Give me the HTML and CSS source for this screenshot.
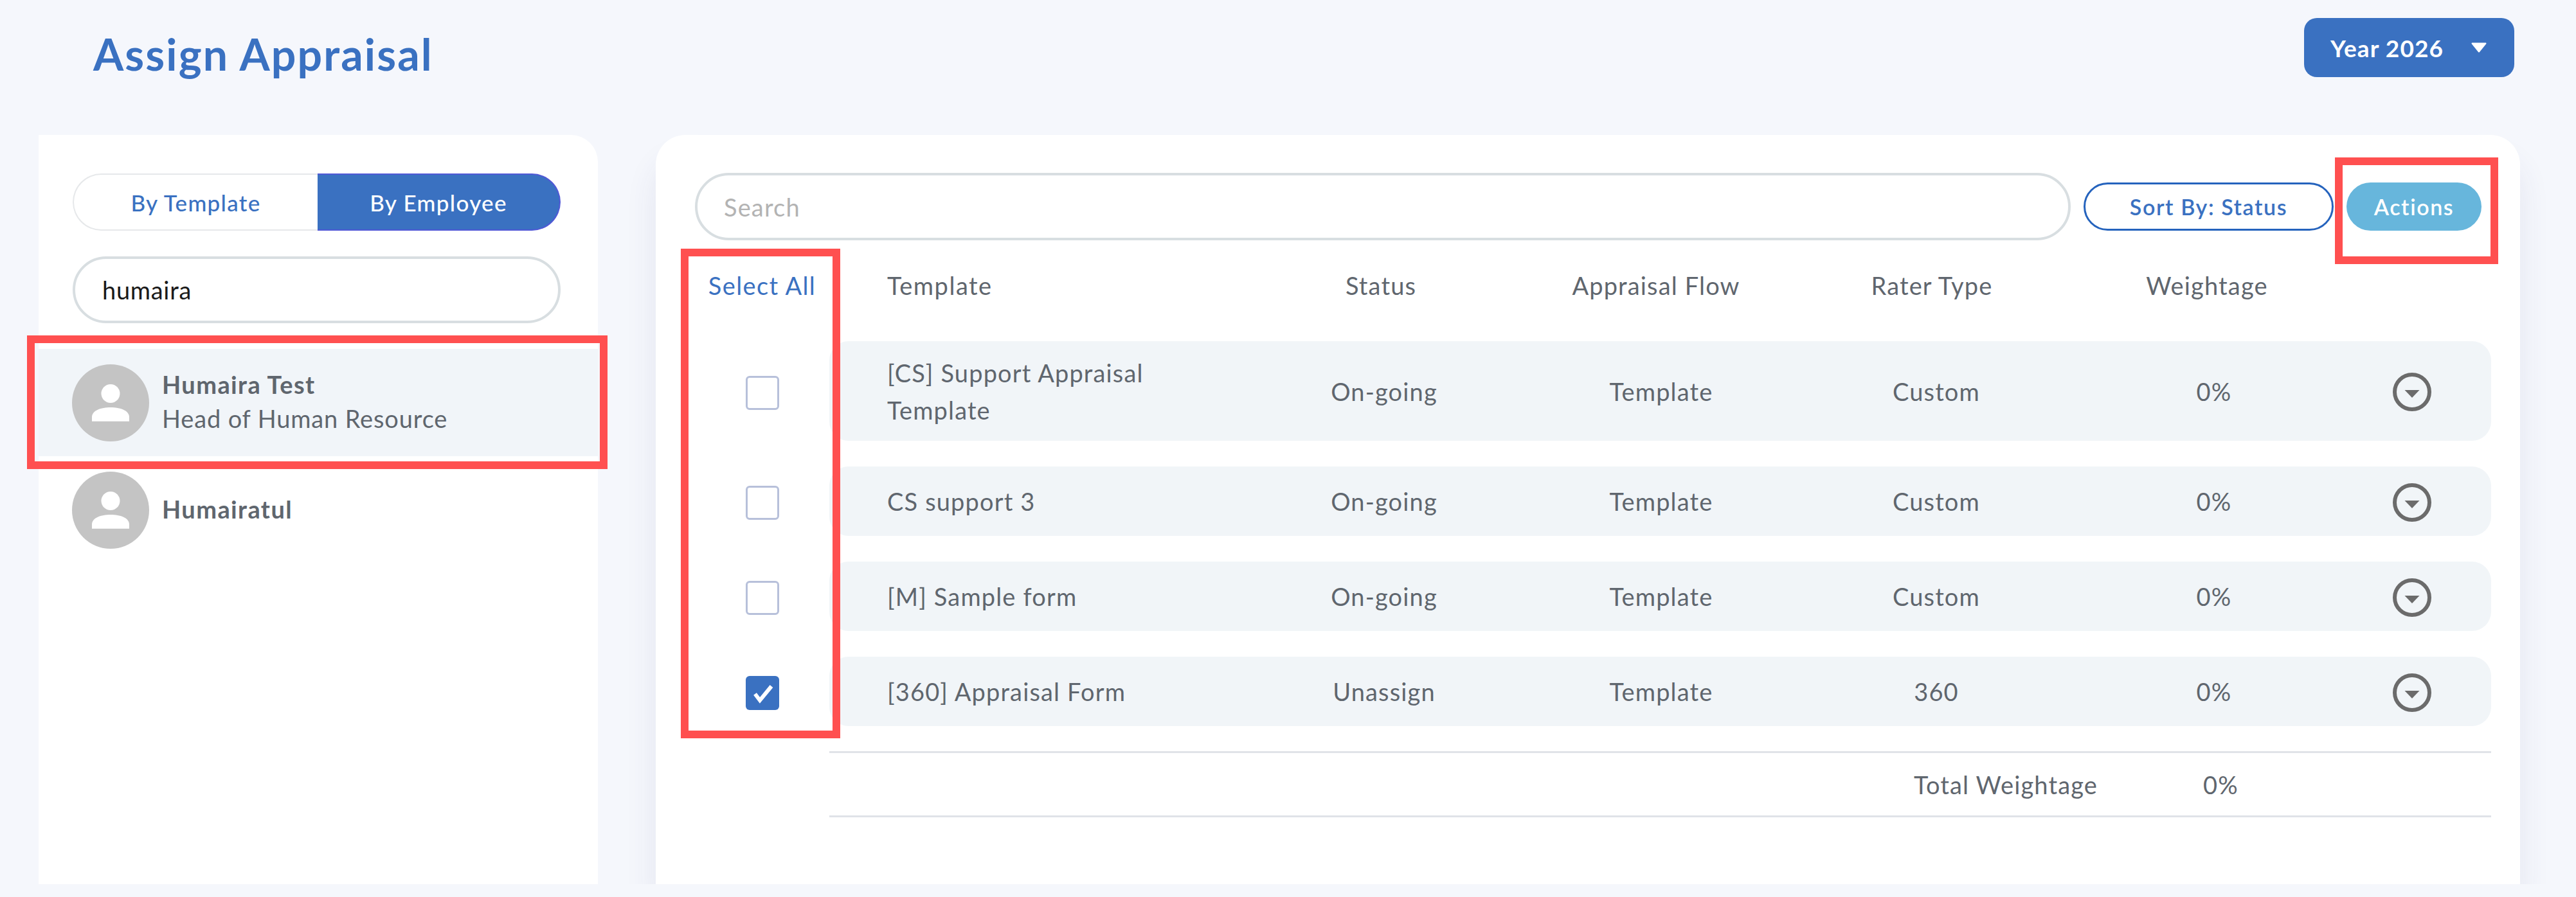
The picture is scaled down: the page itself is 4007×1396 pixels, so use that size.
FILE: index.html
```html
<!DOCTYPE html>
<html lang="en">
<head>
<meta charset="utf-8">
<title>Assign Appraisal</title>
<link rel="stylesheet" href="styles.css">
</head>
<body>
<div class="page">
  <header class="topbar">
    <h1 class="title">Assign Appraisal</h1>
    <button class="year-btn">Year 2026
      <svg class="year-caret" viewBox="0 0 26 16"><path d="M2.500 1.500H23.500L13 14.500Z" fill="#fff" stroke="#fff" stroke-width="2" stroke-linejoin="round"/></svg>
    </button>
  </header>
  <main class="content">
    <aside class="side">
      <div class="toggle">
        <div class="toggle-off">By Template</div>
        <div class="toggle-on">By Employee</div>
      </div>
      <div class="side-search">humaira</div>
      <ul class="people">
        <li class="person person-active">
          <svg class="avatar" viewBox="0 0 120 120"><circle cx="60" cy="60" r="60" fill="#c4c4c4"/><circle cx="60" cy="45.500" r="14.500" fill="#fff"/><path d="M31 88.700V82C31 72 45 67 60 67S89 72 89 82V88.700Z" fill="#fff"/></svg>
          <div class="person-text">
            <div class="person-name">Humaira Test</div>
            <div class="person-role">Head of Human Resource</div>
          </div>
        </li>
        <li class="person">
          <svg class="avatar" viewBox="0 0 120 120"><circle cx="60" cy="60" r="60" fill="#c4c4c4"/><circle cx="60" cy="45.500" r="14.500" fill="#fff"/><path d="M31 88.700V82C31 72 45 67 60 67S89 72 89 82V88.700Z" fill="#fff"/></svg>
          <div class="person-text">
            <div class="person-name">Humairatul</div>
          </div>
        </li>
      </ul>
    </aside>
    <section class="panel">
      <div class="toolbar">
        <div class="search">Search</div>
        <button class="sort-btn">Sort By: Status</button>
        <button class="actions-btn">Actions</button>
      </div>
      <div class="thead">
        <div class="select-all">Select All</div>
        <div class="thead-cols">
          <div class="th-template">Template</div>
          <div class="cell">Status</div>
          <div class="cell">Appraisal Flow</div>
          <div class="cell">Rater Type</div>
          <div class="cell">Weightage</div>
        </div>
      </div>
      <div class="tbody">
        <div class="line tall">
          <div class="check-cell"><span class="check"></span></div>
          <div class="row">
            <div class="td-template">[CS] Support Appraisal Template</div>
            <div class="cell">On-going</div><div class="cell">Template</div><div class="cell">Custom</div><div class="cell">0%</div>
            <div class="cell"><svg class="chev" viewBox="0 0 60 60"><circle cx="30" cy="30" r="27" fill="none" stroke="#6b6b6b" stroke-width="6"/><path d="M18.500 27H41.500L30 39Z" fill="#6b6b6b"/></svg></div>
          </div>
        </div>
        <div class="line">
          <div class="check-cell"><span class="check"></span></div>
          <div class="row">
            <div class="td-template">CS support 3</div>
            <div class="cell">On-going</div><div class="cell">Template</div><div class="cell">Custom</div><div class="cell">0%</div>
            <div class="cell"><svg class="chev" viewBox="0 0 60 60"><circle cx="30" cy="30" r="27" fill="none" stroke="#6b6b6b" stroke-width="6"/><path d="M18.500 27H41.500L30 39Z" fill="#6b6b6b"/></svg></div>
          </div>
        </div>
        <div class="line">
          <div class="check-cell"><span class="check"></span></div>
          <div class="row">
            <div class="td-template">[M] Sample form</div>
            <div class="cell">On-going</div><div class="cell">Template</div><div class="cell">Custom</div><div class="cell">0%</div>
            <div class="cell"><svg class="chev" viewBox="0 0 60 60"><circle cx="30" cy="30" r="27" fill="none" stroke="#6b6b6b" stroke-width="6"/><path d="M18.500 27H41.500L30 39Z" fill="#6b6b6b"/></svg></div>
          </div>
        </div>
        <div class="line">
          <div class="check-cell"><span class="check check-on"><svg class="tick" viewBox="0 0 52 53"><path d="M14.500 28L22 38L40 16" fill="none" stroke="#fff" stroke-width="6"/></svg></span></div>
          <div class="row">
            <div class="td-template">[360] Appraisal Form</div>
            <div class="cell">Unassign</div><div class="cell">Template</div><div class="cell">360</div><div class="cell">0%</div>
            <div class="cell"><svg class="chev" viewBox="0 0 60 60"><circle cx="30" cy="30" r="27" fill="none" stroke="#6b6b6b" stroke-width="6"/><path d="M18.500 27H41.500L30 39Z" fill="#6b6b6b"/></svg></div>
          </div>
        </div>
      </div>
      <div class="total">
        <div class="total-label">Total Weightage</div>
        <div class="total-value">0%</div>
      </div>
    </section>
  </main>
  <div class="mark mark-person"></div>
  <div class="mark mark-select"></div>
  <div class="mark mark-actions"></div>
</div>
</body>
</html>
```
FILE: styles.css
```css
* { box-sizing: border-box; }
html, body { margin: 0; padding: 0; }
body {
  background: #f5f7fc;
  font-family: "Lato", "Liberation Sans", sans-serif;
  color: #5f666e;
  font-size: 38px;
  letter-spacing: 1.150px;
}
.page { position: relative; width: 4007px; height: 1396px; overflow: hidden; }

.topbar {
  display: flex;
  justify-content: space-between;
  align-items: flex-start;
  height: 210px;
  padding: 28px 96px 0 145px;
}
.title {
  margin: 16px 0 0;
  font-size: 68px;
  line-height: 80px;
  font-weight: 700;
  letter-spacing: 2.100px;
  color: #3a71c1;
}
.year-btn {
  display: flex;
  align-items: center;
  justify-content: space-between;
  width: 327px;
  height: 92px;
  padding: 0 42px 0 41px;
  border: 0;
  border-radius: 20px;
  background: #3a71c1;
  color: #fff;
  font: 700 37px "Lato", sans-serif;
  letter-spacing: 1.100px;
}
.year-caret { width: 26px; height: 16px; }

.content {
  display: flex;
  align-items: stretch;
  gap: 90px;
  height: 1166px;
  padding: 0 87px 0 60px;
}

.side {
  flex: 0 0 870px;
  padding-top: 60px;
  background: #fff;
  border-top-right-radius: 42px;
}
.toggle {
  display: flex;
  width: 759px;
  height: 89px;
  margin-left: 53px;
  font-size: 35px;
  font-weight: 500;
  letter-spacing: 1.300px;
}
.toggle-off, .toggle-on {
  display: flex;
  align-items: center;
  justify-content: center;
}
.toggle-off {
  flex: 0 0 381px;
  color: #3a71c1;
  border: 2px solid #e6e8ea;
  border-right: 0;
  border-radius: 45px 0 0 45px;
}
.toggle-on {
  flex: 1;
  color: #fff;
  background: #3a71c1;
  border: 2px solid #5058d6;
  border-left: 0;
  border-radius: 0 45px 45px 0;
}
.side-search {
  display: flex;
  align-items: center;
  width: 759px;
  height: 104px;
  margin: 40px 0 0 53px;
  padding-left: 42px;
  border: 4px solid #d8dee1;
  border-radius: 52px;
  color: #1a1a1a;
  letter-spacing: 0.700px;
}
.people { list-style: none; margin: 40px 0 0; padding: 0; }
.person {
  display: flex;
  align-items: center;
  gap: 20px;
  height: 167px;
  padding-left: 52px;
}
.person-active { background: #f1f5f9; }
.avatar { width: 120px; height: 120px; flex: none; }
.person-text { margin-top: -4px; }
.person-name { line-height: 52px; font-weight: 700; letter-spacing: 1.400px; }
.person-role { line-height: 54px; letter-spacing: 0.850px; }

.panel {
  flex: 1;
  padding: 59px 45px 0 61px;
  background: #fff;
  border-top-left-radius: 46px;
  border-top-right-radius: 46px;
  box-shadow: 0 40px 50px rgba(50, 60, 120, 0.09);
  clip-path: inset(-100px -100px 0 -100px);
}
.toolbar {
  display: flex;
  align-items: center;
  gap: 20px;
  height: 105px;
  padding-right: 15px;
}
.search {
  flex: 1;
  display: flex;
  align-items: center;
  height: 105px;
  padding-left: 41px;
  border: 4px solid #d8dee1;
  border-radius: 53px;
  color: #b3b3b3;
}
.sort-btn {
  width: 389px;
  height: 75px;
  border: 3px solid #2563bd;
  border-radius: 38px;
  background: #fff;
  color: #3a71c1;
  font: 600 34px "Lato", sans-serif;
  letter-spacing: 1.600px;
}
.actions-btn {
  width: 210px;
  height: 75px;
  border: 0;
  border-radius: 38px;
  background: #67b6dc;
  color: #fff;
  font: 600 34px "Lato", sans-serif;
  letter-spacing: 1.600px;
}

.thead {
  display: grid;
  grid-template-columns: 209px 1fr;
  align-items: center;
  height: 157px;
  padding-bottom: 16px;
}
.select-all { width: 209px; margin-top: -2px; text-align: center; color: #3a71c1; letter-spacing: 1.400px; }
.thead-cols {
  display: grid;
  grid-template-columns: 638px 440px 416px 442px 414px;
  align-items: center;
  margin-top: -2px;
}
.th-template { padding-left: 90px; letter-spacing: 1.500px; }
.cell { display: flex; align-items: center; justify-content: center; }

.tbody { display: flex; flex-direction: column; gap: 40px; }
.line { display: grid; grid-template-columns: 209px 1fr; height: 108px; }
.tall { height: 155px; }
.check-cell { display: flex; align-items: center; justify-content: center; padding-top: 5px; }
.check {
  display: block;
  width: 52px;
  height: 53px;
  border: 3px solid #b7c0da;
  border-radius: 6px;
  background: #fff;
}
.check-on { border: 0; background: #3a71c1; }
.tick { display: block; width: 52px; height: 53px; }
.row {
  display: grid;
  grid-template-columns: 647px 432px 430px 426px 438px 178px;
  align-items: center;
  background: #f1f5f8;
  border-radius: 30px;
}
.td-template { padding-left: 90px; padding-right: 120px; line-height: 58px; }
.chev { display: block; width: 60px; height: 60px; margin-top: 3px; }

.total {
  display: grid;
  grid-template-columns: 1687px 450px 1fr;
  align-items: center;
  height: 103px;
  margin: 39px 0 0 209px;
  border-top: 3px solid #e0e3e8;
  border-bottom: 3px solid #e0e3e8;
}
.total-label { grid-column: 2; }
.total-value { grid-column: 3; }

.mark { position: absolute; border: 12px solid #ff5050; pointer-events: none; }
.mark-person { left: 42px; top: 522px; width: 903px; height: 208px; }
.mark-select { left: 1059px; top: 387px; width: 248px; height: 762px; }
.mark-actions { left: 3632px; top: 245px; width: 254px; height: 166px; }
```
